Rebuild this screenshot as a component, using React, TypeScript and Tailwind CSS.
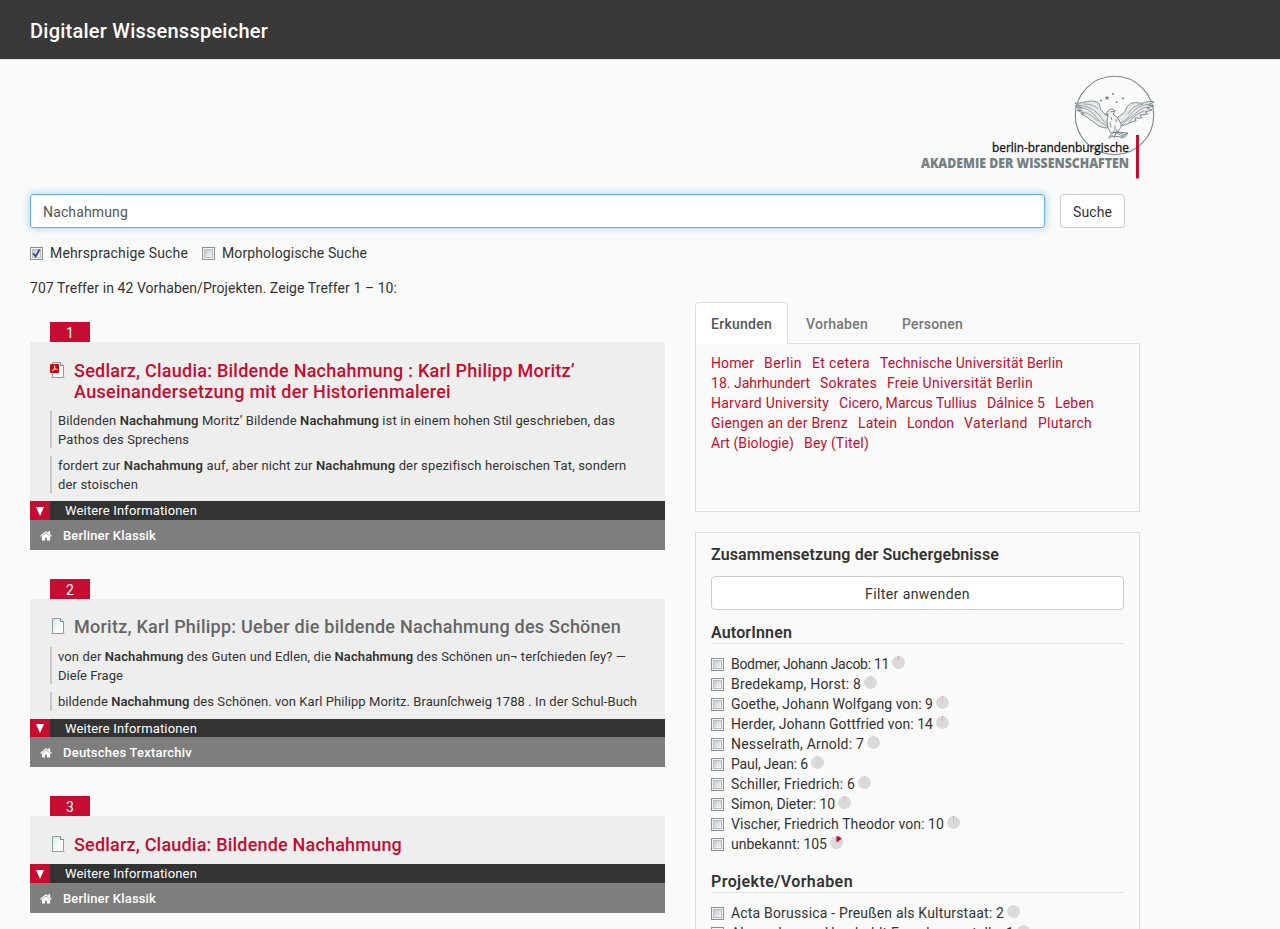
import { useLayoutEffect, useRef, type ReactNode } from "react";

/* Text set to a fixed measure: the tracking is computed so that the line fills it. */
function Fit({ w, className = "", children }: { w: number; className?: string; children: ReactNode }) {
  const ref = useRef<HTMLSpanElement>(null);
  useLayoutEffect(() => {
    const el = ref.current;
    if (!el) return;
    el.style.letterSpacing = "0px";
    const n = (el.textContent ?? "").length;
    const natural = el.getBoundingClientRect().width;
    el.style.letterSpacing = `${(w - natural) / n}px`;
  }, [w]);
  return (
    <span className={`block whitespace-pre ${className}`} style={{ width: w }}>
      <span ref={ref} className="inline-block">{children}</span>
    </span>
  );
}

function Check({ on = false }: { on?: boolean }) {
  return (
    <span className="flex size-[13px] shrink-0 items-center justify-center border border-[#8e8f8f] bg-[#f4f4f4]">
      <span className="flex size-[9px] items-center justify-center border border-[#b9bcc1] bg-linear-to-br from-[#c4c8cf] to-[#f6f6f6]">
        {on && (
          <svg viewBox="0 0 9 9" className="size-[9px] shrink-0 overflow-visible" fill="none" stroke="#3b4f94" strokeWidth="1.9">
            <path d="M1.2 4.2 3.6 7.4 7.6.6" />
          </svg>
        )}
      </span>
    </span>
  );
}

function Pie({ share }: { share: number }) {
  const a = share * Math.PI * 2;
  return (
    <svg viewBox="0 0 14 14" className="relative -top-px ml-[3px] size-3.5 shrink-0">
      <circle cx="6.5" cy="6.5" r="6.5" fill="#dadada" />
      <path
        d={`M6.5 6.5V0A6.5 6.5 0 0 1 ${6.5 + 6.5 * Math.sin(a)} ${6.5 - 6.5 * Math.cos(a)}Z`}
        fill="#c60c30"
        opacity={share > 0.1 ? 1 : share > 0.012 ? 0.5 : 0.25}
      />
    </svg>
  );
}

function FileIcon({ pdf = false }: { pdf?: boolean }) {
  return (
    <svg viewBox="0 0 16 18" className="h-[18px] w-4 shrink-0">
      <defs>
        <linearGradient id="paper" x1="0" y1="0" x2="1" y2="1">
          <stop offset="0" stopColor="#d3e8e6" />
          <stop offset="0.7" stopColor="#ffffff" />
        </linearGradient>
      </defs>
      <path d="M1 17.500h14" stroke="#bac4c4" />
      <path d="M2.500 2.500h8l3 3v12h-11z" fill="url(#paper)" stroke="#8c9f9f" />
      <path d="M10.500 2.500v3h3" fill="#fff" stroke="#71898a" />
      {pdf && (
        <>
          <rect x="0" y="4" width="9" height="9" rx="1" fill="#c9080b" />
          <path d="M2 11c2-1 3-4 2.700-5.200C4.400 5 4 6 4.500 7 5.200 9 6.200 9.500 7.500 9.400 5.500 9 3.500 9.600 2 11z" fill="none" stroke="#fff" strokeWidth=".8" />
        </>
      )}
    </svg>
  );
}

function House() {
  return (
    <svg viewBox="0 0 1664 1500" className="h-[11px] w-3 shrink-0" fill="#fff">
      <path d="M1408 900v480q0 26-19 45t-45 19H960v-384H704v384H320q-26 0-45-19t-19-45V900L832 425zm223-69-62 74q-8 9-21 11h-3q-13 0-21-7L832 331 140 909q-12 8-24 7-13-2-21-11l-62-74q-8-10-7-23.500t11-21.500l719-599q32-26 76-26t76 26l244 204V196q0-14 9-23t23-9h192q14 0 23 9t9 23v408l219 182q10 8 11 21.500t-7 23.500z" />
    </svg>
  );
}

function Logo() {
  return (
    <svg viewBox="0 0 240 110" className="h-[110px] w-60">
      <circle cx="194.500" cy="44.500" r="39.200" fill="none" stroke="#7b8789" strokeWidth="1.100" />
      <g fill="none" stroke="#738083" strokeWidth=".9" strokeLinecap="round" strokeLinejoin="round">
        <path fill="#e6e9e9" d="M187 57C182 57 178 55 175 52C172 49 169 49 167 46L161 43L164 43L157 39L162 40L155 35L162 37L155 32C164 33 169 28 177 31C181 33 179 37 182 40C184 43 187 44 190 46Z" />
        <path fill="#e6e9e9" d="M198 46C202 43 205 42 206 38C208 32 214 31 219 32C225 33 228 29 234 31L228 34L234 35L227 37L232 39L225 41L228 43L220 44L222 47L215 47L216 50C211 50 208 54 201 55Z" />
        <path strokeWidth=".7" d="M158 34C167 35 174 38 179 44S184 51 188 54M161 37C168 37 172 41 176 46S183 53 187 55M162 41C169 42 173 46 178 50M164 33Q174 33 178 38M230 33C220 34 215 38 211 43S206 49 201 52M227 36C219 37 216 43 210 47S205 52 202 54M224 40Q215 43 209 51M223 33Q212 34 208 43" />
        <path fill="#f7f7f7" d="M188 43L185 44L188 40Q191 36 195 40L193 43Q198 46 200 51C203 56 199 58 198 61L191 62Q187 58 187 50Q188 47 188 43Z" />
        <path d="M190 41L195 40M191 46L192 49M196 48L196 51M190 52L191 56M195 55L195 59M194 60L189 66M197 59L194 67M191 65L202 66L207 62M198 61L208 62L205 66L201 67M189 67L193 65M194 61L203 65M197 61L206 64" />
      </g>
      <g fill="#758184">
        <path d="m187 29.500.7 1.600 1.700.1-1.300 1.100.4 1.700-1.500-.9-1.500.9.400-1.700-1.300-1.100 1.700-.1z" transform="translate(0 -5)" />
        <circle cx="181" cy="29.500" r="1" />
        <circle cx="193" cy="23" r="1" />
        <circle cx="203" cy="27.500" r="1" />
        <circle cx="196.500" cy="31" r="1" />
      </g>
      <text x="72" y="81" textLength="137" lengthAdjust="spacingAndGlyphs" className="font-['Open_Sans',sans-serif] text-[12.5px]" fill="#111" stroke="#111" strokeWidth=".3">berlin-brandenburgische</text>
      <text x="1" y="97" textLength="208" lengthAdjust="spacingAndGlyphs" className="font-['Open_Sans',sans-serif] text-[14px] font-extrabold" fill="#748084">AKADEMIE DER WISSENSCHAFTEN</text>
      <rect x="216" y="64" width="3" height="43.500" fill="#c60c30" />
    </svg>
  );
}

type Line = { w: number; t: string };
type Result = { titles: Line[]; pdf?: boolean; grey?: boolean; quotes: Line[][]; source: Line; bar: string };

/* Words between asterisks are the highlighted hits. */
const results: Result[] = [
  {
    pdf: true,
    titles: [
      { w: 501, t: "Sedlarz, Claudia: Bildende Nachahmung : Karl Philipp Moritz’" },
      { w: 377, t: "Auseinandersetzung mit der Historienmalerei" },
    ],
    quotes: [
      [
        { w: 557, t: "Bildenden *Nachahmung* Moritz’ Bildende *Nachahmung* ist in einem hohen Stil geschrieben, das" },
        { w: 131, t: "Pathos des Sprechens" },
      ],
      [
        { w: 568, t: "fordert zur *Nachahmung* auf, aber nicht zur *Nachahmung* der spezifisch heroischen Tat, sondern" },
        { w: 80, t: "der stoischen" },
      ],
    ],
    source: { w: 93, t: "Berliner Klassik" },
    bar: "h-[19px]",
  },
  {
    grey: true,
    titles: [{ w: 547, t: "Moritz, Karl Philipp: Ueber die bildende Nachahmung des Schönen" }],
    quotes: [
      [
        { w: 568, t: "von der *Nachahmung* des Guten und Edlen, die *Nachahmung* des Schönen un¬ terſchieden ſey? —" },
        { w: 65, t: "Dieſe Frage" },
      ],
      [{ w: 579, t: "bildende *Nachahmung* des Schönen. von Karl Philipp Moritz. Braunſchweig 1788 . In der Schul-Buch" }],
    ],
    source: { w: 129, t: "Deutsches Textarchiv" },
    bar: "h-[18px]",
  },
  {
    titles: [{ w: 328, t: "Sedlarz, Claudia: Bildende Nachahmung" }],
    quotes: [],
    source: { w: 93, t: "Berliner Klassik" },
    bar: "h-[19px]",
  },
];

function marked(t: string) {
  return t.split("*").map((part, i) => (i % 2 ? <b key={i} className="font-semibold">{part}</b> : part));
}

function Card({ r, n }: { r: Result; n: number }) {
  return (
    <article className="mb-[29px]">
      <div className="ml-5 flex h-5 w-10 items-center justify-center bg-[#c60c30] pt-0.5 text-sm text-white">{n}</div>
      <div className={`bg-[#eee] px-5 ${r.grey ? "pt-[17px]" : "pt-[18px]"} ${r.quotes.length ? "pb-2" : "pb-[9px]"}`}>
        <div className="flex gap-2">
          <FileIcon pdf={r.pdf} />
          <h2 className={`text-[18px] leading-[21px] font-medium ${r.grey ? "pb-px text-[#666]" : "text-[#c60c30]"}`}>
            {r.titles.map((l) => <Fit key={l.t} w={l.w}>{l.t}</Fit>)}
          </h2>
        </div>
        {r.quotes.map((q, i) => (
          <blockquote
            key={i}
            className={`border-l-2 border-[#c8c8c8] pl-1.5 text-[13px] leading-[19px] ${i ? "mt-2" : "mt-[9px]"} ${q.length > 1 ? "h-[37px]" : "h-[19px]"}`}
          >
            {q.map((l) => <Fit key={l.t} w={l.w}>{marked(l.t)}</Fit>)}
          </blockquote>
        ))}
      </div>
      <div className={`flex items-center bg-[#333] text-[13px] text-white ${r.bar}`}>
        <span className="flex h-full w-5 items-center justify-center bg-[#c60c30]">
          <svg viewBox="0 0 8 9" className="mt-px h-[9px] w-2" fill="#fff"><path d="M0 0h8L4 9z" /></svg>
        </span>
        <Fit w={132} className="ml-[15px] pt-px">Weitere Informationen</Fit>
      </div>
      <div className="flex h-[30px] items-center gap-[11px] bg-[#7e7e7e] pl-2.5 text-[13px] font-medium text-white">
        <House />
        <Fit w={r.source.w} className="pt-px">{r.source.t}</Fit>
      </div>
    </article>
  );
}

const tags: [string, number][][] = [
  [["Homer", 43], ["Berlin", 38], ["Et cetera", 58], ["Technische Universität Berlin", 183]],
  [["18. Jahrhundert", 99], ["Sokrates", 57], ["Freie Universität Berlin", 146]],
  [["Harvard University", 118], ["Cicero, Marcus Tullius", 138], ["Dálnice 5", 58], ["Leben", 39]],
  [["Giengen an der Brenz", 137], ["Latein", 39], ["London", 47], ["Vaterland", 64], ["Plutarch", 54]],
  [["Art (Biologie)", 83], ["Bey (Titel)", 65]],
];

const authors: [string, number, number][] = [
  ["Bodmer, Johann Jacob", 11, 158],
  ["Bredekamp, Horst", 8, 130],
  ["Goethe, Johann Wolfgang von", 9, 202],
  ["Herder, Johann Gottfried von", 14, 202],
  ["Nesselrath, Arnold", 7, 133],
  ["Paul, Jean", 6, 77],
  ["Schiller, Friedrich", 6, 124],
  ["Simon, Dieter", 10, 104],
  ["Vischer, Friedrich Theodor von", 10, 213],
  ["unbekannt", 105, 96],
];

const projects: [string, number, number][] = [
  ["Acta Borussica - Preußen als Kulturstaat", 2, 273],
  ["Alexander-von-Humboldt-Forschungsstelle", 1, 283],
];

function Facet({ title, w, items }: { title: string; w: number; items: [string, number, number][] }) {
  return (
    <section>
      <h3 className="flex h-[22px] items-center border-b border-[#e2e2e2] text-base leading-5 font-semibold">
        <Fit w={w}>{title}</Fit>
      </h3>
      <ul className="pt-2.5">
        {items.map(([name, count, width]) => (
          <li key={name} className="flex h-5 items-center">
            <Check />
            <Fit w={width} className="ml-[7px]">{`${name}: ${count}`}</Fit>
            <Pie share={count / 707} />
          </li>
        ))}
      </ul>
    </section>
  );
}

export default function App() {
  return (
    <div className="h-[929px] w-full overflow-hidden bg-[#fafafa] font-[Roboto,'Noto_Sans',sans-serif] text-sm leading-5 text-[#333]">
      <header className="flex h-[59px] items-center bg-[#333] bg-[repeating-linear-gradient(45deg,rgba(51,51,51,0.5)_0px,rgba(51,51,51,0.5)_1.414px,transparent_1.414px,transparent_2.828px),repeating-conic-gradient(#363636_0%_25%,#414141_25%_50%)] bg-size-[4px_4px] px-[30px] pt-[3px] text-xl font-medium text-white">
        <Fit w={238}>Digitaler Wissensspeicher</Fit>
      </header>
      <div className="h-[135px] border-t border-[#e5e5e5] pt-[11px] pl-[920px]">
        <Logo />
      </div>
      <div className="flex gap-[15px] pl-[30px]">
        <div className="flex h-[34px] w-[1015px] items-center rounded-[3px] border border-[#66afe9] bg-white pt-0.5 pl-3 text-[#555] shadow-[inset_0_1px_1px_rgba(0,0,0,0.075),0_0_8px_rgba(102,175,233,0.6)]">
          <Fit w={85}>Nachahmung</Fit>
        </div>
        <button className="flex h-[34px] w-[65px] items-center justify-center rounded border border-[#ccc] bg-white pt-0.5">
          <Fit w={39}>Suche</Fit>
        </button>
      </div>
      <div className="mt-[15px] flex h-5 items-center pl-[30px]">
        <Check on />
        <Fit w={138} className="ml-[7px]">Mehrsprachige Suche</Fit>
        <span className="ml-3.5"><Check /></span>
        <Fit w={145} className="ml-[7px]">Morphologische Suche</Fit>
      </div>
      <div className="flex gap-[30px] pl-[30px]">
        <main className="w-[635px] pt-[15px]">
          <Fit w={367} className="mb-6">707 Treffer in 42 Vorhaben/Projekten. Zeige Treffer 1 – 10:</Fit>
          {results.map((r, i) => <Card key={i} r={r} n={i + 1} />)}
        </main>
        <aside className="w-[445px] pt-[39px]">
          <nav className="flex h-[42px] font-medium text-[#777]">
            <div className="flex w-[93px] items-center justify-center rounded-t border border-b-0 border-[#ddd] bg-white pt-px text-[#555]">
              <Fit w={61}>Erkunden</Fit>
            </div>
            <div className="flex flex-1 items-center gap-[34px] border-b border-[#ddd] pt-[3px] pl-[18px]">
              <Fit w={62}>Vorhaben</Fit>
              <Fit w={61}>Personen</Fit>
            </div>
          </nav>
          <div className="h-[168px] border border-t-0 border-[#ddd] pt-[9px] pl-[15px] text-[#c60c30]">
            {tags.map((row, i) => (
              <div key={i} className="flex gap-2.5">
                {row.map(([t, w]) => <Fit key={t} w={w}>{t}</Fit>)}
              </div>
            ))}
          </div>
          <div className="mt-5 border border-[#ddd] px-[15px] pt-3">
            <h2 className="text-base leading-5 font-semibold"><Fit w={288}>Zusammensetzung der Suchergebnisse</Fit></h2>
            <button className="mt-[11px] mb-3 flex h-[34px] w-full items-center justify-center rounded border border-[#ccc] bg-white pt-0.5">
              <Fit w={105}>Filter anwenden</Fit>
            </button>
            <Facet title="AutorInnen" w={81} items={authors} />
            <div className="h-[17px]" />
            <Facet title="Projekte/Vorhaben" w={142} items={projects} />
          </div>
        </aside>
      </div>
    </div>
  );
}
